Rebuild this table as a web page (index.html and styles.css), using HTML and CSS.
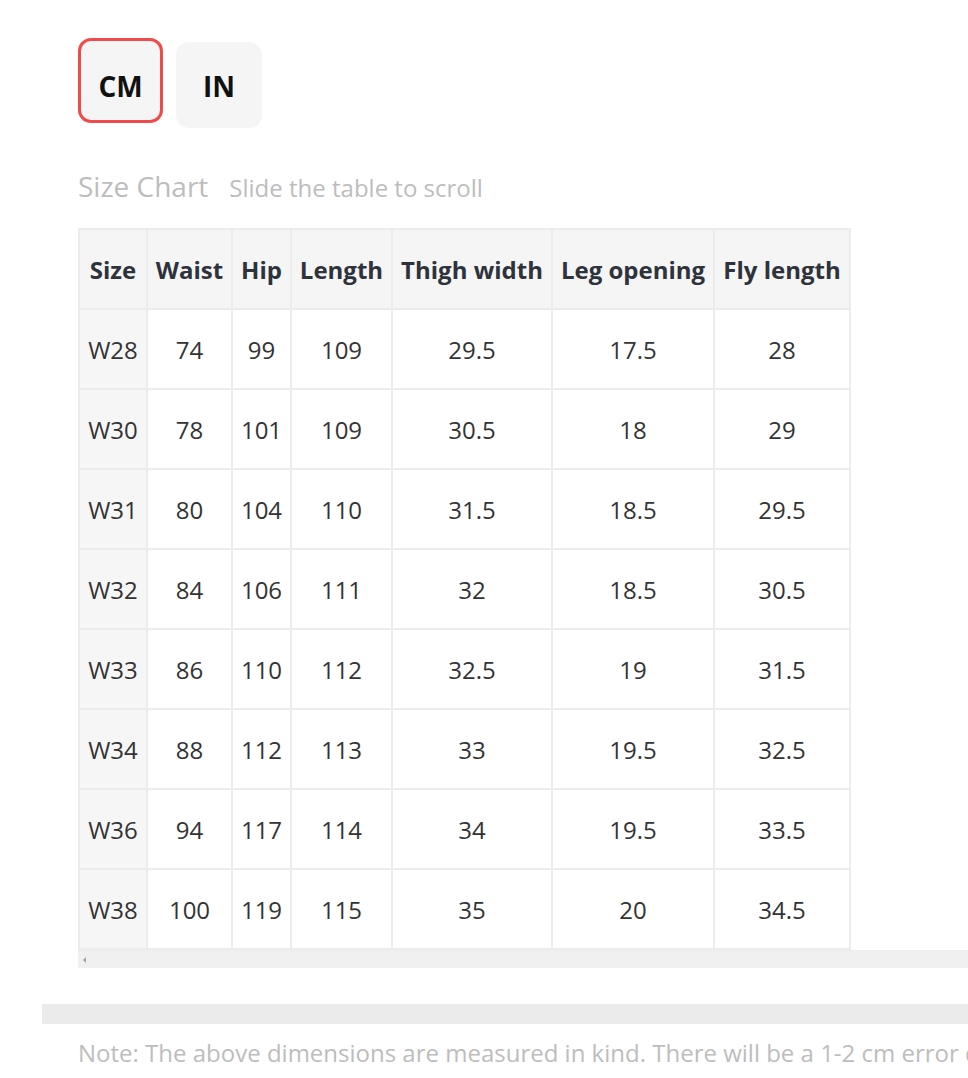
FILE: index.html
```html
<!DOCTYPE html>
<html>
<head>
<meta charset="utf-8">
<link rel="stylesheet" href="styles.css">
</head>
<body>
<div class="page">
  <div class="units">
    <div class="unit unit-active">CM</div>
    <div class="unit unit-plain">IN</div>
  </div>
  <div class="title-row">
    <span class="title">Size Chart</span>
    <span class="hint">Slide the table to scroll</span>
  </div>
  <div class="scroller">
    <table class="chart">
      <colgroup>
        <col class="c1"><col class="c2"><col class="c3"><col class="c4"><col class="c5"><col class="c6"><col class="c7">
      </colgroup>
      <thead>
        <tr><th>Size</th><th>Waist</th><th>Hip</th><th>Length</th><th>Thigh width</th><th>Leg opening</th><th>Fly length</th></tr>
      </thead>
      <tbody>
        <tr><td class="size">W28</td><td>74</td><td>99</td><td>109</td><td>29.5</td><td>17.5</td><td>28</td></tr>
        <tr><td class="size">W30</td><td>78</td><td>101</td><td>109</td><td>30.5</td><td>18</td><td>29</td></tr>
        <tr><td class="size">W31</td><td>80</td><td>104</td><td>110</td><td>31.5</td><td>18.5</td><td>29.5</td></tr>
        <tr><td class="size">W32</td><td>84</td><td>106</td><td>111</td><td>32</td><td>18.5</td><td>30.5</td></tr>
        <tr><td class="size">W33</td><td>86</td><td>110</td><td>112</td><td>32.5</td><td>19</td><td>31.5</td></tr>
        <tr><td class="size">W34</td><td>88</td><td>112</td><td>113</td><td>33</td><td>19.5</td><td>32.5</td></tr>
        <tr><td class="size">W36</td><td>94</td><td>117</td><td>114</td><td>34</td><td>19.5</td><td>33.5</td></tr>
        <tr><td class="size">W38</td><td>100</td><td>119</td><td>115</td><td>35</td><td>20</td><td>34.5</td></tr>
      </tbody>
    </table>
    <div class="scrollbar"><span class="arrow"></span></div>
  </div>
  <div class="divider"></div>
  <p class="note">Note: The above dimensions are measured in kind. There will be a 1-2 cm error due to different measurement methods.</p>
</div>
</body>
</html>
```

FILE: styles.css
```css
html, body {
  margin: 0;
  padding: 0;
  overflow: hidden;
  background: #fff;
  font-family: "Open Sans", "Liberation Sans", sans-serif;
}
.page {
  width: 968px;
  height: 1078px;
  overflow: hidden;
}
.units {
  display: flex;
  align-items: flex-start;
  gap: 13px;
  padding: 38px 0 0 78px;
}
.unit {
  box-sizing: border-box;
  display: flex;
  align-items: center;
  justify-content: center;
  background: #f5f5f5;
  border-radius: 13px;
  font-size: 28px;
  font-weight: 700;
  color: #111;
}
.unit-active {
  width: 85px;
  height: 85px;
  border: 3px solid #f04b4b;
  padding-top: 11px;
}
.unit-plain {
  width: 86px;
  height: 86px;
  margin-top: 4px;
  padding-top: 2px;
}
.title-row {
  display: flex;
  align-items: baseline;
  gap: 21px;
  padding: 38px 0 0 78px;
  height: 40px;
}
.title {
  font-size: 28px;
  color: #bdbdbd;
  line-height: 40px;
}
.hint {
  font-size: 24px;
  color: #bdbdbd;
}
.scroller {
  margin: 22px 0 0 78px;
  width: 960px;
}
.chart {
  border-collapse: collapse;
  table-layout: fixed;
  width: 771px;
}
.c1 { width: 68px; }
.c2 { width: 85px; }
.c3 { width: 59px; }
.c4 { width: 101px; }
.c5 { width: 160px; }
.c6 { width: 162px; }
.c7 { width: 136px; }
.chart th, .chart td {
  border: 2px solid #ececec;
  height: 78px;
  padding: 0;
  text-align: center;
  font-size: 24px;
  color: #333;
  white-space: nowrap;
}
.chart th {
  background: #f5f5f5;
  font-weight: 700;
  color: #2e333b;
}
.chart td.size {
  background: #f6f6f6;
}
.scrollbar {
  height: 17px;
  background: #f0f0f0;
  border-top: 1px solid #ececec;
  display: flex;
  align-items: center;
  padding-left: 5px;
}
.arrow {
  width: 0;
  height: 0;
  border-top: 3px solid transparent;
  border-bottom: 3px solid transparent;
  border-right: 3px solid #a3a3a3;
}
.divider {
  margin: 36px 0 0 42px;
  height: 20px;
  background: #ebebeb;
}
.note {
  margin: 13px 0 0 78px;
  font-size: 24px;
  color: #bdbdbd;
  white-space: nowrap;
  line-height: 32px;
}
```
